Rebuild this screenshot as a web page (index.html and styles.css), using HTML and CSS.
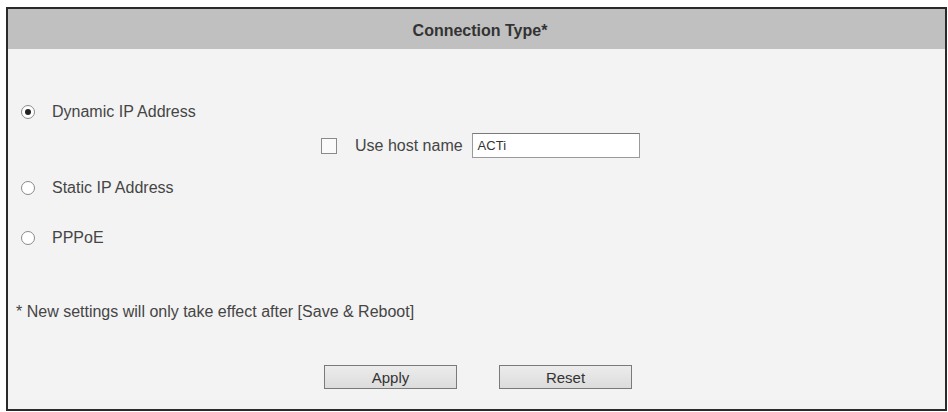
FILE: index.html
```html
<!DOCTYPE html>
<html>
<head>
<meta charset="utf-8">
<link rel="stylesheet" href="styles.css">
</head>
<body>
<div class="panel">
  <div class="header">Connection Type*</div>
  <div class="content">
    <label class="row row-dynamic"><span class="radio checked"></span><span class="label">Dynamic IP Address</span></label>
    <div class="host-row">
      <span class="checkbox"></span>
      <span class="label host-label">Use host name</span>
      <span class="text-input">ACTi</span>
    </div>
    <label class="row row-static"><span class="radio"></span><span class="label">Static IP Address</span></label>
    <label class="row row-pppoe"><span class="radio"></span><span class="label">PPPoE</span></label>
    <div class="note">* New settings will only take effect after [Save &amp; Reboot]</div>
    <div class="buttons">
      <span class="btn">Apply</span>
      <span class="btn">Reset</span>
    </div>
  </div>
</div>
</body>
</html>
```

FILE: styles.css
```css
html, body {
  margin: 0;
  padding: 0;
  background: #ffffff;
  font-family: "Liberation Sans", Arial, sans-serif;
}
.panel {
  margin: 7px 1px 0 6px;
  height: 400px;
  border: 2px solid #2a2a2a;
  background: #f3f3f3;
  display: flex;
  flex-direction: column;
}
.header {
  box-sizing: border-box;
  height: 40px;
  padding-top: 3px;
  background: #c0c0c0;
  display: flex;
  align-items: center;
  justify-content: center;
  font-size: 16px;
  font-weight: bold;
  color: #333333;
  padding-left: 7px;
}
.content {
  display: flex;
  flex-direction: column;
  padding-top: 53px;
}
.row {
  display: flex;
  align-items: center;
  height: 20px;
  padding-left: 13px;
}
.row-static { margin-top: 20px; }
.row-pppoe { margin-top: 30px; }
.radio {
  width: 12px;
  height: 12px;
  border: 1px solid #8a8a8a;
  border-radius: 50%;
  background: #ffffff;
  display: flex;
  align-items: center;
  justify-content: center;
  margin-right: 17px;
}
.radio.checked::after {
  content: "";
  width: 6px;
  height: 6px;
  border-radius: 50%;
  background: #222222;
}
.label {
  font-size: 16px;
  color: #454545;
}
.host-row {
  display: flex;
  align-items: center;
  height: 25px;
  margin-top: 11px;
  padding-left: 313px;
}
.checkbox {
  width: 14px;
  height: 14px;
  border: 1px solid #8a8a8a;
  background: #fafafa;
  margin-right: 18px;
}
.host-label { margin-right: 9px; }
.text-input {
  box-sizing: border-box;
  width: 168px;
  height: 25px;
  border: 1px solid #9a9a9a;
  border-top-color: #7a7a7a;
  background: #ffffff;
  font-size: 13px;
  color: #333333;
  padding-left: 5px;
  display: flex;
  align-items: center;
}
.note {
  margin-top: 55px;
  height: 18px;
  padding-left: 8px;
  font-size: 16px;
  color: #454545;
  display: flex;
  align-items: center;
}
.buttons {
  display: flex;
  gap: 42px;
  margin-top: 44px;
  padding-left: 316px;
}
.btn {
  box-sizing: border-box;
  width: 133px;
  height: 24px;
  border: 1px solid #7a7a7a;
  background: linear-gradient(#ececec, #dcdcdc);
  display: flex;
  align-items: center;
  justify-content: center;
  font-size: 15px;
  color: #333333;
}
```
